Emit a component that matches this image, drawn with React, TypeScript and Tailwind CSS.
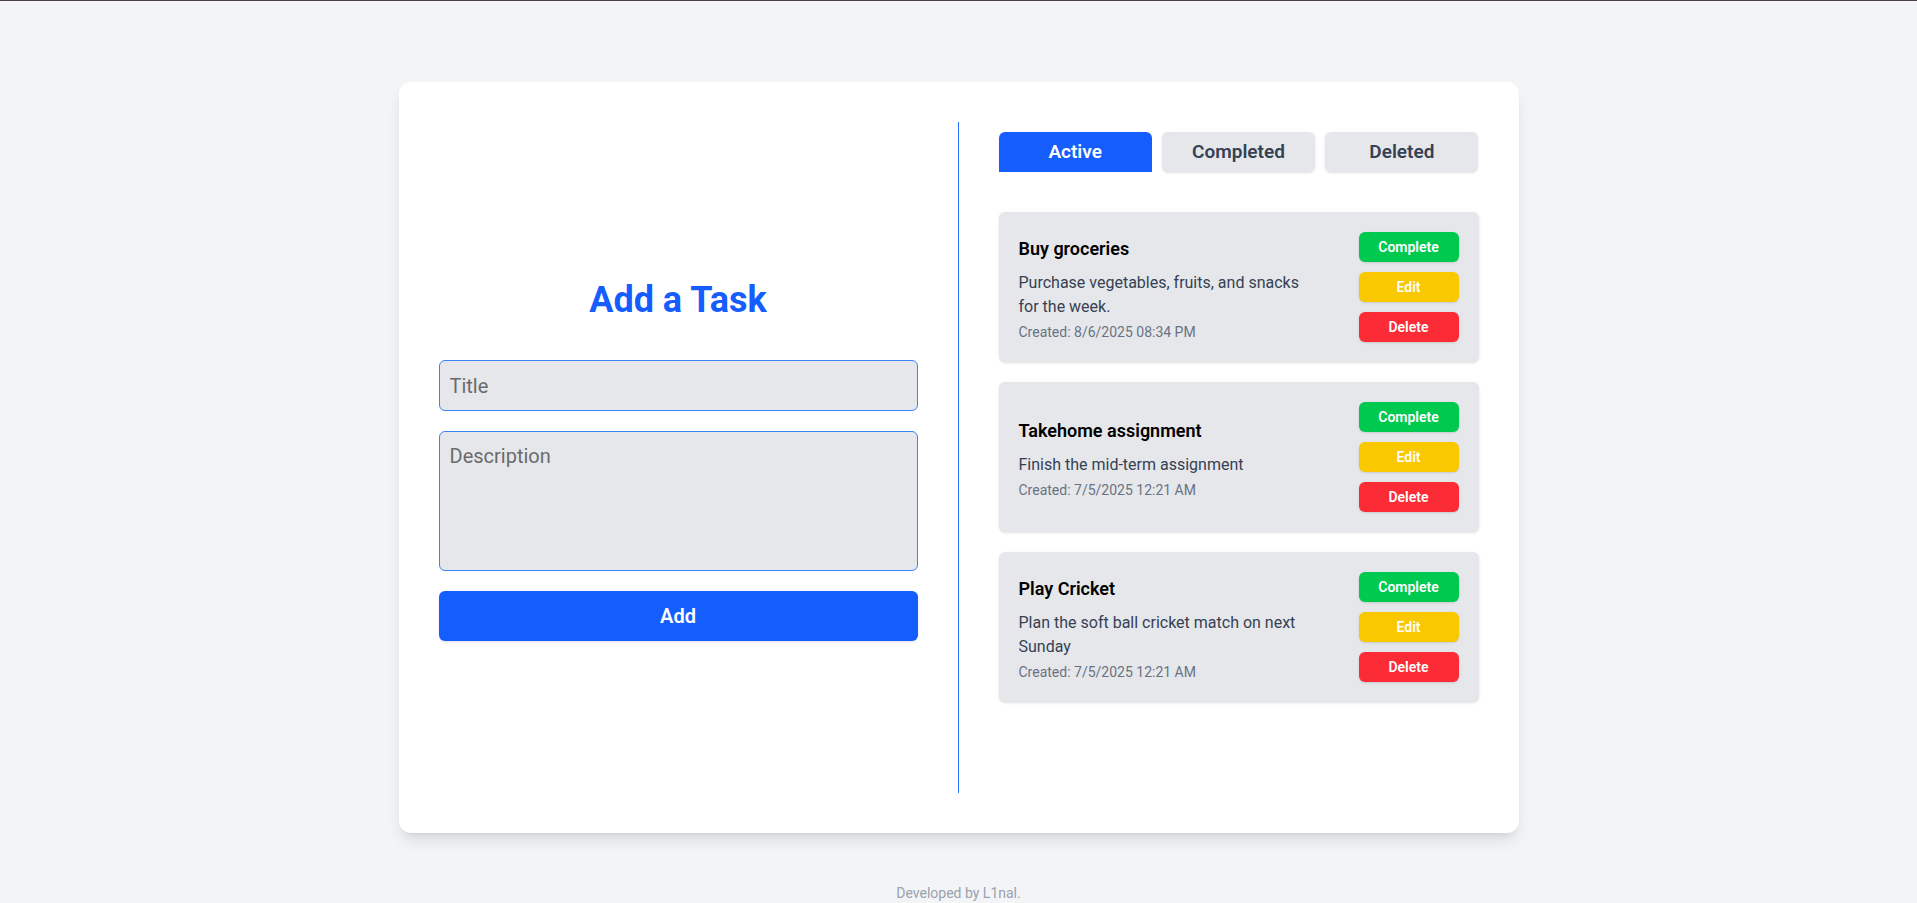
import React from "react";

const tasks = [
  {
    title: "Buy groceries",
    desc: "Purchase vegetables, fruits, and snacks for the week.",
    created: "Created: 8/6/2025 08:34 PM",
  },
  {
    title: "Takehome assignment",
    desc: "Finish the mid-term assignment",
    created: "Created: 7/5/2025 12:21 AM",
  },
  {
    title: "Play Cricket",
    desc: "Plan the soft ball cricket match on next Sunday",
    created: "Created: 7/5/2025 12:21 AM",
  },
];

export default function App() {
  return (
    <div
      className="min-h-screen bg-[#f3f4f6] border-t border-[#4a4043] flex flex-col items-center"
      style={{ fontFamily: "Roboto, 'Noto Sans', Arial, sans-serif" }}
    >
      <div className="mt-[81px] w-[1120px] h-[751px] bg-white rounded-xl shadow-lg p-10 grid grid-cols-2">
        {/* Left column */}
        <div className="pr-10 border-r border-[#2b6fff] flex flex-col justify-center pt-[6px]">
          <h1 className="text-4xl font-bold text-[#155dfc] text-center mb-10">Add a Task</h1>
          <input
            className="w-full h-[51px] bg-[#e5e7eb] border border-[#3b82f6] rounded-md px-[10px] text-xl text-gray-700 placeholder:text-[#6b6b6b] outline-none"
            placeholder="Title"
          />
          <textarea
            className="w-full h-[140px] mt-5 bg-[#e5e7eb] border border-[#3b82f6] rounded-md px-[10px] py-[10px] text-xl text-gray-700 placeholder:text-[#6b6b6b] outline-none resize-none"
            placeholder="Description"
          />
          <button className="w-full h-[50px] mt-5 bg-[#155dfc] text-white text-xl font-semibold rounded-md shadow-sm">
            Add
          </button>
        </div>

        {/* Right column */}
        <div className="pl-10 flex flex-col">
          <div className="grid grid-cols-3 gap-[10px] mt-[10px]">
            <button className="h-10 bg-[#155dfc] text-white text-[19px] font-semibold rounded-t-md">Active</button>
            <button className="h-10 bg-[#e5e7eb] text-[#364153] text-[19px] font-semibold rounded-md shadow-sm">Completed</button>
            <button className="h-10 bg-[#e5e7eb] text-[#364153] text-[19px] font-semibold rounded-md shadow-sm">Deleted</button>
          </div>
          <div className="mt-10 flex flex-col gap-5">
            {tasks.map((t) => (
              <div key={t.title} className="bg-[#e5e7eb] rounded-md shadow-sm p-5 flex items-center justify-between">
                <div className="w-[292px] pt-[2px]">
                  <div className="text-lg font-semibold text-black mb-2 leading-7">{t.title}</div>
                  <div className="text-base text-[#364153] leading-6">{t.desc}</div>
                  <div className="text-sm text-[#6a7282] mt-[3px] leading-5">{t.created}</div>
                </div>
                <div className="flex flex-col gap-[10px]">
                  <button className="w-[100px] h-[30px] bg-[#00c950] text-white text-sm font-semibold rounded-md shadow-sm">Complete</button>
                  <button className="w-[100px] h-[30px] bg-[#fac800] text-white text-sm font-semibold rounded-md shadow-sm">Edit</button>
                  <button className="w-[100px] h-[30px] bg-[#fb2c36] text-white text-sm font-semibold rounded-md shadow-sm">Delete</button>
                </div>
              </div>
            ))}
          </div>
        </div>
      </div>
      <div className="mt-[50px] text-sm text-[#99a1af]">Developed by L1nal.</div>
    </div>
  );
}
